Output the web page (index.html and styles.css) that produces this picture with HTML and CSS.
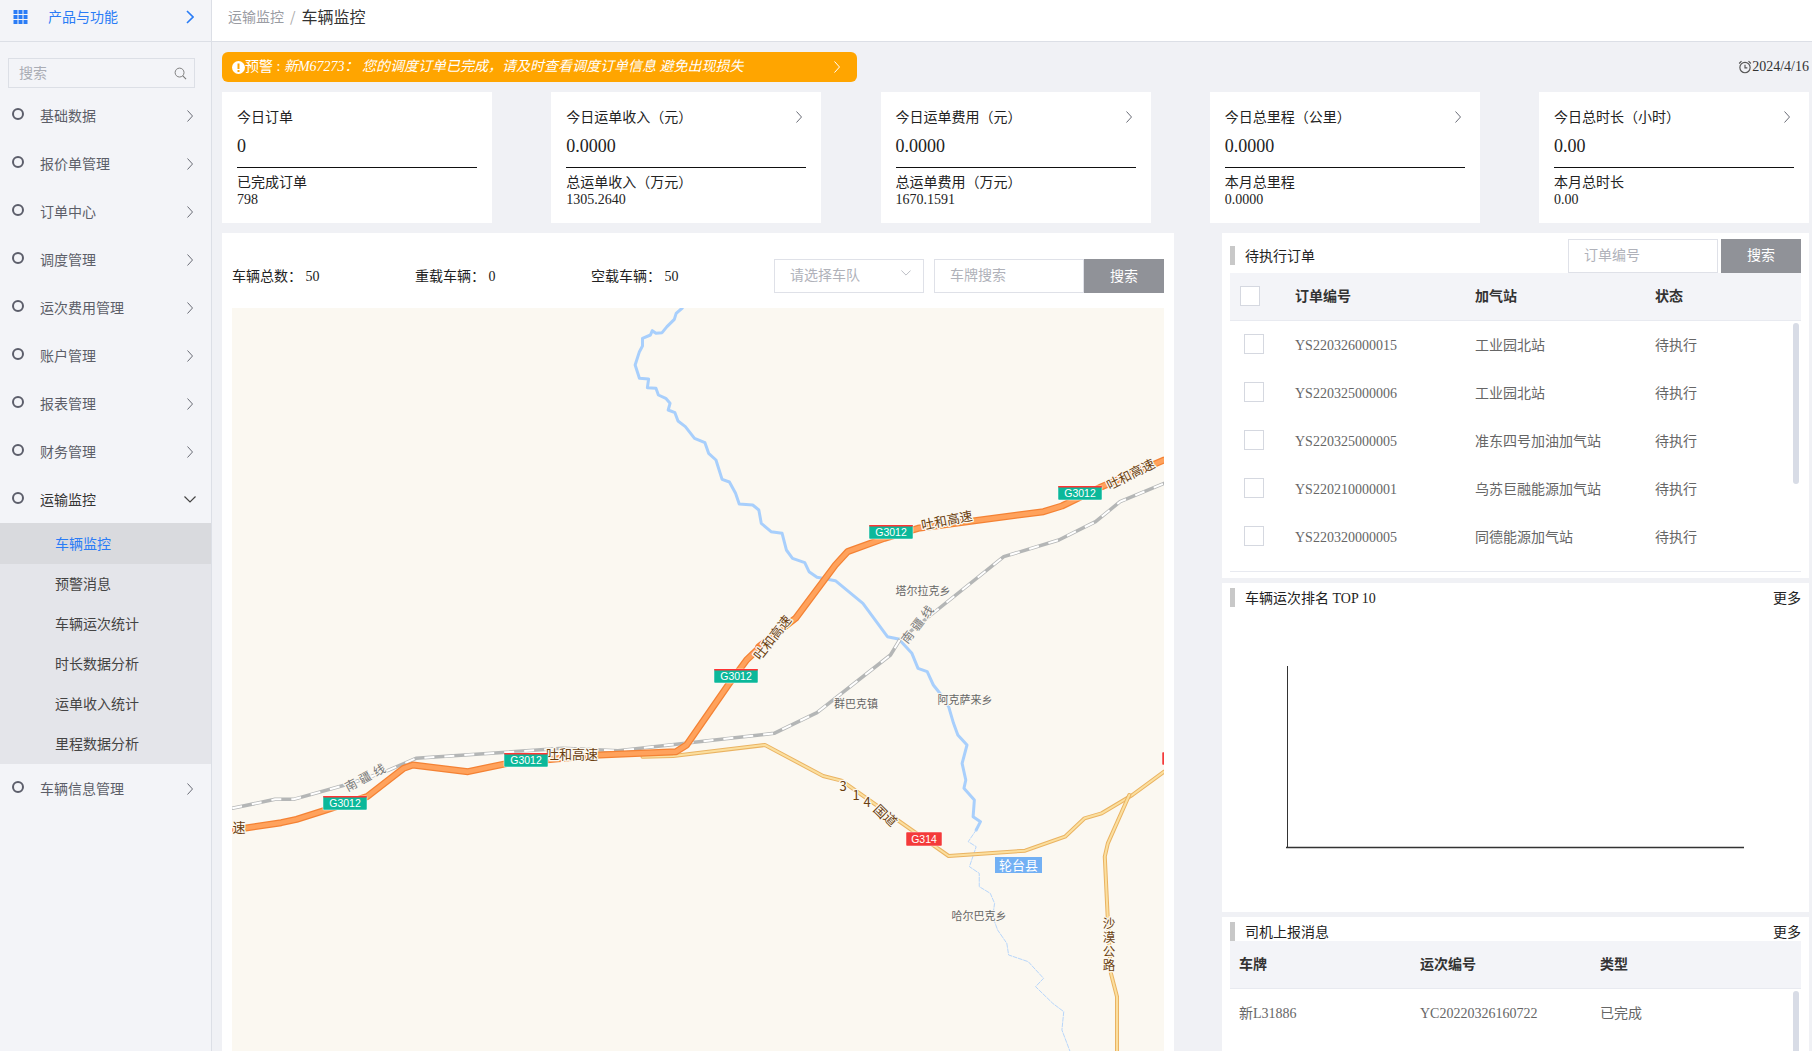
FILE: index.html
```html
<!DOCTYPE html>
<html lang="zh-CN">
<head>
<meta charset="utf-8">
<title>车辆监控</title>
<link rel="stylesheet" href="styles.css">
</head>
<body>
<div class="app">
  <aside class="sidebar">
    <div class="brand">
      <svg class="brand-grid" viewBox="0 0 14 14"><g fill="#2a7cf6"><rect x="0" y="0" width="4" height="4"/><rect x="5" y="0" width="4" height="4"/><rect x="10" y="0" width="4" height="4"/><rect x="0" y="5" width="4" height="4"/><rect x="5" y="5" width="4" height="4"/><rect x="10" y="5" width="4" height="4"/><rect x="0" y="10" width="4" height="4"/><rect x="5" y="10" width="4" height="4"/><rect x="10" y="10" width="4" height="4"/></g></svg>
      <span class="brand-text">产品与功能</span>
      <svg class="brand-chev" viewBox="0 0 8 14"><path d="M1 1l6 6-6 6" fill="none" stroke="#2a7cf6" stroke-width="1.6"/></svg>
    </div>
    <div class="side-search">
      <span>搜索</span>
      <svg class="side-search-icon" viewBox="0 0 14 14"><circle cx="6" cy="6" r="4.8" fill="none" stroke="#777" stroke-width="1"/><path d="M9.5 9.5l3.5 3.5" stroke="#777" stroke-width="1.2"/></svg>
    </div>
    <nav class="menu">
      <div class="menu-item"><i class="dot"></i><span>基础数据</span><svg class="chev" viewBox="0 0 6 12"><path d="M.5 .5l5 5.5-5 5.5"/></svg></div>
      <div class="menu-item"><i class="dot"></i><span>报价单管理</span><svg class="chev" viewBox="0 0 6 12"><path d="M.5 .5l5 5.5-5 5.5"/></svg></div>
      <div class="menu-item"><i class="dot"></i><span>订单中心</span><svg class="chev" viewBox="0 0 6 12"><path d="M.5 .5l5 5.5-5 5.5"/></svg></div>
      <div class="menu-item"><i class="dot"></i><span>调度管理</span><svg class="chev" viewBox="0 0 6 12"><path d="M.5 .5l5 5.5-5 5.5"/></svg></div>
      <div class="menu-item"><i class="dot"></i><span>运次费用管理</span><svg class="chev" viewBox="0 0 6 12"><path d="M.5 .5l5 5.5-5 5.5"/></svg></div>
      <div class="menu-item"><i class="dot"></i><span>账户管理</span><svg class="chev" viewBox="0 0 6 12"><path d="M.5 .5l5 5.5-5 5.5"/></svg></div>
      <div class="menu-item"><i class="dot"></i><span>报表管理</span><svg class="chev" viewBox="0 0 6 12"><path d="M.5 .5l5 5.5-5 5.5"/></svg></div>
      <div class="menu-item"><i class="dot"></i><span>财务管理</span><svg class="chev" viewBox="0 0 6 12"><path d="M.5 .5l5 5.5-5 5.5"/></svg></div>
      <div class="menu-item open"><i class="dot"></i><span>运输监控</span><svg class="chev-down" viewBox="0 0 12 7"><path d="M.5 .5l5.5 5.5 5.5-5.5"/></svg></div>
      <div class="submenu">
        <div class="sub-item active">车辆监控</div>
        <div class="sub-item">预警消息</div>
        <div class="sub-item">车辆运次统计</div>
        <div class="sub-item">时长数据分析</div>
        <div class="sub-item">运单收入统计</div>
        <div class="sub-item">里程数据分析</div>
      </div>
      <div class="menu-item"><i class="dot"></i><span>车辆信息管理</span><svg class="chev" viewBox="0 0 6 12"><path d="M.5 .5l5 5.5-5 5.5"/></svg></div>
    </nav>
  </aside>

  <div class="content">
    <header class="topbar">
      <span class="crumb">运输监控</span><span class="crumb-sep">/</span><span class="crumb-cur">车辆监控</span>
    </header>
    <main class="main">
      <div class="alert-row">
        <div class="alert">
          <svg class="alert-icon" viewBox="0 0 13 13"><circle cx="6.5" cy="6.5" r="6.5" fill="#fff"/><rect x="5.5" y="2.5" width="2" height="5.5" fill="#ffa500"/><rect x="5.5" y="9" width="2" height="2" fill="#ffa500"/></svg>
          <span class="alert-text">预警 : <em>新M67273： 您的调度订单已完成，请及时查看调度订单信息 避免出现损失</em></span>
          <svg class="alert-chev" viewBox="0 0 6 12"><path d="M.5 .5l5 5.5-5 5.5" fill="none" stroke="#fff" stroke-width="1"/></svg>
        </div>
        <div class="date">
          <svg class="clock" viewBox="0 0 12 12"><circle cx="6" cy="6.5" r="4.4" fill="none" stroke="#555" stroke-width="1"/><path d="M6 4v2.8h2M1 3l2-2M11 3L9 1" fill="none" stroke="#555" stroke-width="1"/></svg>2024/4/16
        </div>
      </div>

      <section class="cards">
        <div class="card">
          <div class="card-title"><span>今日订单</span></div>
          <div class="card-value">0</div>
          <div class="card-sub">已完成订单</div>
          <div class="card-subval">798</div>
        </div>
        <div class="card">
          <div class="card-title"><span>今日运单收入（元）</span><svg class="chev" viewBox="0 0 6 12"><path d="M.5 .5l5 5.5-5 5.5"/></svg></div>
          <div class="card-value">0.0000</div>
          <div class="card-sub">总运单收入（万元）</div>
          <div class="card-subval">1305.2640</div>
        </div>
        <div class="card">
          <div class="card-title"><span>今日运单费用（元）</span><svg class="chev" viewBox="0 0 6 12"><path d="M.5 .5l5 5.5-5 5.5"/></svg></div>
          <div class="card-value">0.0000</div>
          <div class="card-sub">总运单费用（万元）</div>
          <div class="card-subval">1670.1591</div>
        </div>
        <div class="card">
          <div class="card-title"><span>今日总里程（公里）</span><svg class="chev" viewBox="0 0 6 12"><path d="M.5 .5l5 5.5-5 5.5"/></svg></div>
          <div class="card-value">0.0000</div>
          <div class="card-sub">本月总里程</div>
          <div class="card-subval">0.0000</div>
        </div>
        <div class="card">
          <div class="card-title"><span>今日总时长（小时）</span><svg class="chev" viewBox="0 0 6 12"><path d="M.5 .5l5 5.5-5 5.5"/></svg></div>
          <div class="card-value">0.00</div>
          <div class="card-sub">本月总时长</div>
          <div class="card-subval">0.00</div>
        </div>
      </section>

      <section class="lower">
        <div class="map-panel">
          <div class="toolbar">
            <div class="stat stat-a">车辆总数： 50</div>
            <div class="stat stat-b">重载车辆： 0</div>
            <div class="stat stat-c">空载车辆： 50</div>
            <div class="select"><span>请选择车队</span><svg class="select-chev" viewBox="0 0 12 7"><path d="M.5 .5l5.5 5.5 5.5-5.5"/></svg></div>
            <div class="plate-input">车牌搜索</div>
            <div class="btn btn-plate">搜索</div>
          </div>
          <div class="map">
            <svg class="map-svg" viewBox="232 308 932 743" preserveAspectRatio="xMinYMin slice">
              <g transform="translate(220,220) scale(.6123,.33333)">
                <path class="river" d="M755 264L745 280 742 298 730 320 722 338 712 340 706 332 703 345 690 355 690 378 685 395 678 435 685 475 700 477 698 503 712 505 716 525 728 535 735 550 732 570 743 578 748 603 760 620 775 655 792 668 798 700 810 720 820 778 832 786 842 820 848 852 870 855 880 870 884 910 900 935 918 940 925 990 935 1015 955 1028 962 1055 975 1072 1005 1082 1050 1150 1090 1250 1110 1258"/>
                <path class="rail-o" d="M1110 1260L1280 1010 1370 960 1430 905 1470 845 1542 790"/>
                <path class="rail-i" d="M1110 1260L1280 1010 1370 960 1430 905 1470 845 1542 790"/>
                <path class="hw-o" d="M880 1280L940 1195 1005 1035 1025 995 1085 955 1140 925 1345 875 1375 858 1440 800 1542 720"/>
                <path class="hw-i" d="M880 1280L940 1195 1005 1035 1025 995 1085 955 1140 925 1345 875 1375 858 1440 800 1542 720"/>
              </g>
              <g transform="translate(220,640) scale(.6123,.33333)">
                <path class="river" d="M1110 0L1130 40 1140 85 1155 95 1165 135 1178 165 1190 200 1198 250 1205 285 1220 315 1212 370 1218 420 1215 445 1232 480 1230 530 1242 545 1235 570"/>
                <path class="river-thin" d="M1235 570L1222 605 1235 620 1224 680 1240 700 1240 740 1258 760 1265 790 1262 830 1270 870 1285 910 1288 945 1320 965 1345 1015 1332 1040 1360 1090 1378 1115 1375 1170 1388 1233"/>
                <path class="rail-o" d="M20 505L90 478 120 478 210 432 270 395 320 355 560 325 650 332 905 280 975 218 1095 45 1110 0"/>
                <path class="rail-i" d="M20 505L90 478 120 478 210 432 270 395 320 355 560 325 650 332 905 280 975 218 1095 45 1110 0"/>
                <path class="rd-o" d="M690 350L740 348 890 315 985 408 1015 422 1190 648 1315 632 1380 590 1412 535 1440 520 1490 465 1542 395"/>
                <path class="rd-i" d="M690 350L740 348 890 315 985 408 1015 422 1190 648 1315 632 1380 590 1412 535 1440 520 1490 465 1542 395"/>
                <path class="rd-o" d="M1485 465L1450 610 1445 650 1450 840 1455 1000 1465 1070 1465 1233"/>
                <path class="rd-i" d="M1485 465L1450 610 1445 650 1450 840 1455 1000 1465 1070 1465 1233"/>
                <path class="hw-o" d="M20 570L100 548 125 538 170 512 240 470 300 385 315 375 405 395 470 370 620 345 745 335 762 315 830 135 860 60 880 25"/>
                <path class="hw-i" d="M20 570L100 548 125 538 170 512 240 470 300 385 315 375 405 395 470 370 620 345 745 335 762 315 830 135 860 60 880 25"/>
              </g>

              <g class="lbl-road">
                <text x="947" y="525" transform="rotate(-11 947 521)">吐和高速</text>
                <text x="1131" y="479" transform="rotate(-27 1131 475)">吐和高速</text>
                <text x="773" y="642" transform="rotate(-52 773 638)">吐和高速</text>
                <text x="572" y="759">吐和高速</text>
                <text x="239" y="832">速</text>
                <text x="843" y="791">3</text><text x="856" y="800">1</text><text x="867" y="807">4</text>
                <text x="880" y="816" transform="rotate(45 880 812)">国</text>
                <text x="890" y="824" transform="rotate(45 890 820)">道</text>
                <text class="vertical" x="1109" y="917">沙漠公路</text>
              </g>
              <g class="lbl-rail">
                <text x="367" y="781" transform="rotate(-28 367 777)">南疆线</text>
                <text x="919" y="627" transform="rotate(-52 919 623)">南疆线</text>
              </g>
              <g class="lbl-town">
                <text x="923" y="595">塔尔拉克乡</text>
                <text x="856" y="708">群巴克镇</text>
                <text x="965" y="704">阿克萨来乡</text>
                <text x="979" y="920">哈尔巴克乡</text>
              </g>
              <rect class="county-box" x="995" y="857" width="47" height="16"/>
              <text class="county" x="1018.5" y="869.5">轮台县</text>

              <g class="shield"><rect x="1058" y="486" width="44" height="14"/><rect class="shield-top" x="1058" y="486" width="44" height="1.5"/><text x="1080" y="496.5">G3012</text></g>
              <g class="shield"><rect x="869" y="525" width="44" height="14"/><rect class="shield-top" x="869" y="525" width="44" height="1.5"/><text x="891" y="535.5">G3012</text></g>
              <g class="shield"><rect x="714" y="669" width="44" height="14"/><rect class="shield-top" x="714" y="669" width="44" height="1.5"/><text x="736" y="679.5">G3012</text></g>
              <g class="shield"><rect x="504" y="753" width="44" height="14"/><rect class="shield-top" x="504" y="753" width="44" height="1.5"/><text x="526" y="763.5">G3012</text></g>
              <g class="shield"><rect x="323" y="796" width="44" height="14"/><rect class="shield-top" x="323" y="796" width="44" height="1.5"/><text x="345" y="806.5">G3012</text></g>
              <g class="shield red"><rect x="906" y="832" width="36" height="14"/><text x="924" y="842.5">G314</text></g>
              <g class="shield red"><rect x="1162" y="752" width="10" height="13"/></g>
            </svg>
          </div>
        </div>

        <div class="right-col">
          <div class="panel panel-orders">
            <div class="panel-head head-orders">
              <i class="bar"></i><span class="panel-title">待执行订单</span>
              <div class="order-input">订单编号</div>
              <div class="btn btn-order">搜索</div>
            </div>
            <div class="thead order-grid">
              <i class="check check-head"></i><span>订单编号</span><span>加气站</span><span>状态</span>
            </div>
            <div class="tbody">
              <div class="trow order-grid"><i class="check"></i><span>YS220326000015</span><span>工业园北站</span><span>待执行</span></div>
              <div class="trow order-grid"><i class="check"></i><span>YS220325000006</span><span>工业园北站</span><span>待执行</span></div>
              <div class="trow order-grid"><i class="check"></i><span>YS220325000005</span><span>准东四号加油加气站</span><span>待执行</span></div>
              <div class="trow order-grid"><i class="check"></i><span>YS220210000001</span><span>乌苏巨融能源加气站</span><span>待执行</span></div>
              <div class="trow order-grid"><i class="check"></i><span>YS220320000005</span><span>同德能源加气站</span><span>待执行</span></div>
              <i class="scroll scroll-orders"></i>
            </div>
          </div>

          <div class="panel panel-chart">
            <div class="panel-head head-slim">
              <i class="bar"></i><span class="panel-title">车辆运次排名 TOP 10</span><span class="more">更多</span>
            </div>
            <svg class="chart" viewBox="0 0 470 190"><path d="M1.5 0V181.5" stroke="#333" stroke-width="1" fill="none"/><path d="M0 181.5H458" stroke="#333" stroke-width="1.4" fill="none"/></svg>
          </div>

          <div class="panel panel-msgs">
            <div class="panel-head head-slim">
              <i class="bar"></i><span class="panel-title">司机上报消息</span><span class="more">更多</span>
            </div>
            <div class="thead msg-grid"><span>车牌</span><span>运次编号</span><span>类型</span></div>
            <div class="tbody tbody-msg">
              <div class="trow msg-grid"><span>新L31886</span><span>YC20220326160722</span><span>已完成</span></div>
              <i class="scroll scroll-msgs"></i>
            </div>
          </div>
        </div>
      </section>
    </main>
  </div>
</div>
</body>
</html>
```

FILE: styles.css
```css
* { box-sizing: border-box; }
html, body { margin: 0; padding: 0; height: 100%; overflow: hidden; }
body { font-family: "Liberation Serif", "Noto Sans CJK SC", serif; font-size: 14px; line-height: 20px; color: #333; background: #f0f1f5; }
i { display: block; }

.app { display: flex; width: 1812px; height: 1051px; overflow: hidden; }

/* Sidebar */
.sidebar { width: 212px; flex: none; background: #f3f4f8; border-right: 1px solid #dcdfe6; font-family: "Noto Sans CJK SC", "Noto Sans", sans-serif; color: #5c5e68; }
.brand { height: 42px; border-bottom: 1px solid #dcdfe6; display: flex; align-items: center; padding: 0 17px 8px 13px; }
.brand-grid { width: 15px; height: 14px; flex: none; margin-top: 1px; }
.brand-text { margin-left: 20px; margin-top: -2px; color: #2a7cf6; flex: 1; }
.brand-chev { width: 8px; height: 14px; flex: none; }
.side-search { margin: 16px 16px 3px 8px; height: 30px; border: 1px solid #dcdfe6; display: flex; align-items: center; padding: 0 7px 0 10px; color: #aaadb5; justify-content: space-between; }
.side-search span { margin-top: -3px; }
.side-search-icon { width: 13px; height: 13px; }
.menu { display: block; }
.menu-item { height: 48px; display: flex; align-items: center; padding: 0 18px 0 12px; }
.menu-item span { flex: 1; margin-left: 16px; }
.dot { width: 12px; height: 12px; border: 2px solid #5c5e6b; border-radius: 50%; flex: none; margin-top: -2px; }
.chev { width: 6px; height: 12px; flex: none; }
.menu-item .chev { margin-top: 1px; }
.chev path { fill: none; stroke: #6a6c76; stroke-width: 1; }
.chev-down { width: 12px; height: 7px; flex: none; margin-right: -3px; }
.chev-down path { fill: none; stroke: #444; stroke-width: 1.2; }
.menu-item.open { color: #333; }
.submenu { background: #e4e5ea; color: #444; }
.sub-item { height: 40px; line-height: 38px; padding-left: 55px; }
.sub-item.active { height: 41px; line-height: 40px; background: #d9dade; color: #2a7cf6; }

/* Top */
.content { flex: 1; min-width: 0; display: flex; flex-direction: column; }
.topbar { height: 42px; background: #fff; border-bottom: 1px solid #dcdfe6; display: flex; align-items: center; padding: 0 0 10px 16px; font-family: "Noto Sans CJK SC", sans-serif; }
.crumb { color: #9a9ca3; }
.crumb-sep { color: #aaa; margin: 0 6px; }
.crumb-cur { font-size: 16px; color: #333; }

.main { flex: 1; min-height: 0; padding: 10px 3px 0 10px; display: flex; flex-direction: column; }
.alert-row { display: flex; justify-content: space-between; align-items: center; height: 30px; flex: none; }
.alert { width: 635px; height: 30px; background: #ffa500; border-radius: 6px; display: flex; align-items: center; color: #fff; padding: 0 17px 0 10px; }
.alert-icon { width: 13px; height: 13px; flex: none; }
.alert-text { flex: 1; }
.alert-chev { width: 6px; height: 12px; flex: none; }
.date { display: flex; align-items: center; color: #333; }
.clock { width: 14px; height: 14px; margin-right: 0; }

.cards { display: flex; justify-content: space-between; margin-top: 10px; flex: none; }
.card { width: 270px; height: 131px; background: #fff; padding: 15px 15px 0; color: #222; }
.card-title { display: flex; justify-content: space-between; align-items: center; height: 20px; }
.card-title span { padding-top: 2px; }
.card-title .chev { margin-right: 4px; }
.card-value { font-size: 18px; height: 41px; line-height: 38px; border-bottom: 1px solid #111; }
.card-sub { margin-top: 5px; }
.card-subval { line-height: 14px; height: 14px; }

.lower { display: flex; justify-content: space-between; flex: 1; min-height: 0; margin-top: 10px; }

/* Map panel */
.map-panel { width: 952px; flex: none; background: #fff; padding: 26px 10px 0; display: flex; flex-direction: column; overflow: hidden; }
.toolbar { display: flex; align-items: center; height: 34px; flex: none; color: #222; }
.stat { white-space: pre; padding-top: 2px; }
.stat-a { width: 183px; }
.stat-b { width: 176px; }
.stat-c { width: 183px; }
.select { width: 150px; height: 34px; border: 1px solid #dfe1e8; color: #b0b2ba; display: flex; align-items: center; justify-content: space-between; padding: 0 12px 0 15px; }
.select-chev { width: 10px; height: 6px; margin-top: -6px; }
.select-chev path { fill: none; stroke: #b0b2ba; stroke-width: 1; }
.plate-input { width: 150px; height: 34px; margin-left: 10px; border: 1px solid #dfe1e8; color: #b0b2ba; display: flex; align-items: center; padding-left: 15px; }
.btn { background: #909298; color: #fff; display: flex; align-items: center; justify-content: center; flex: none; }
.btn-plate { width: 80px; height: 34px; padding-top: 1px; }
.map { flex: 1; min-height: 0; margin-top: 15px; background: #fbf8f1; overflow: hidden; }
.map-svg { display: block; width: 932px; height: 743px; font-family: "Noto Sans CJK SC", sans-serif; }
.map-svg path { fill: none; vector-effect: non-scaling-stroke; stroke-linejoin: round; stroke-linecap: round; }
.river { stroke: #a8cffc; stroke-width: 3; }
.river-thin { stroke: #b7d6fb; stroke-width: 1; stroke-dasharray: 4 1.5; }
.rail-o { stroke: #b4b6b6; stroke-width: 3.5; }
.rail-i { stroke: #fff; stroke-width: 2; stroke-dasharray: 10 10; stroke-linecap: butt !important; }
.hw-o { stroke: #f48234; stroke-width: 7; }
.hw-i { stroke: #ffa25c; stroke-width: 4.5; }
.rd-o { stroke: #eab362; stroke-width: 4; }
.rd-i { stroke: #fbdf9f; stroke-width: 2; }
.map-svg text { font-size: 11px; text-anchor: middle; paint-order: stroke; stroke-linejoin: round; }
.map-svg .lbl-road text { fill: #6b3f10; stroke: #fbf8f1; stroke-width: 2.5; font-size: 13px; }
.map-svg .lbl-road .vertical { writing-mode: vertical-rl; text-anchor: start; letter-spacing: 1.5px; font-size: 12.5px; }
.map-svg .lbl-rail text { fill: #777; stroke: #fbf8f1; stroke-width: 2.5; font-size: 12px; letter-spacing: 4px; }
.lbl-town text { fill: #666; stroke: #fbf8f1; stroke-width: 2; }
.county-box { fill: #72b0f4; }
.map-svg .county { fill: #fff; font-size: 13px; }
.shield rect { fill: #0bb89a; stroke: #fff; stroke-width: .5; rx: 1px; }
.shield .shield-top { fill: #f33; stroke: none; }
.shield.red rect { fill: #f43a3a; }
.map-svg .shield text { fill: #fff; font-size: 10.5px; font-family: "Liberation Sans", sans-serif; }

/* Right column */
.right-col { width: 587px; flex: none; display: flex; flex-direction: column; gap: 5px; min-height: 0; }
.panel { background: #fff; padding: 5px 8px 0; flex: none; }
.panel-orders { height: 345px; }
.panel-chart { height: 329px; }
.panel-msgs { flex: 1; min-height: 0; overflow: hidden; }
.panel-head { display: flex; align-items: center; height: 35px; color: #222; }
.head-slim { height: 19px; }
.bar { width: 5px; height: 19px; background: #c8c8c8; flex: none; margin-right: 10px; }
.panel-title { flex: 1; padding-top: 2px; }
.more { padding-top: 2px; }
.order-input { width: 150px; height: 34px; border: 1px solid #dfe1e8; color: #b0b2ba; display: flex; align-items: center; padding-left: 15px; }
.btn-order { width: 80px; height: 34px; margin-left: 3px; }
.more { color: #222; }
.thead { height: 48px; background: #f3f4f8; border-bottom: 1px solid #e8eaf0; font-weight: 700; color: #333; font-family: "Noto Sans CJK SC", sans-serif; padding-bottom: 4px; }
.order-grid { display: grid; grid-template-columns: 65px 180px 180px 1fr; align-items: center; }
.msg-grid { display: grid; grid-template-columns: 181px 180px 1fr; align-items: center; padding-left: 9px; }
.check { width: 20px; height: 20px; border: 1px solid #d5d8e0; background: #fff; margin: -3px 0 0 14px; }
.check-head { margin: 2px 0 0 10px; }
.tbody { position: relative; height: 251px; border-bottom: 1px solid #e8eaf0; overflow: hidden; }
.tbody-msg { height: 100px; border-bottom: 0; }
.trow { height: 48px; color: #666; padding-top: 1px; }
.scroll { position: absolute; right: 2px; width: 6px; background: #d8dce6; border-radius: 3px; }
.scroll-orders { top: 2px; height: 161px; }
.scroll-msgs { top: 2px; height: 100px; }
.chart { display: block; width: 470px; height: 190px; margin: 59px 0 0 55.5px; }
```
